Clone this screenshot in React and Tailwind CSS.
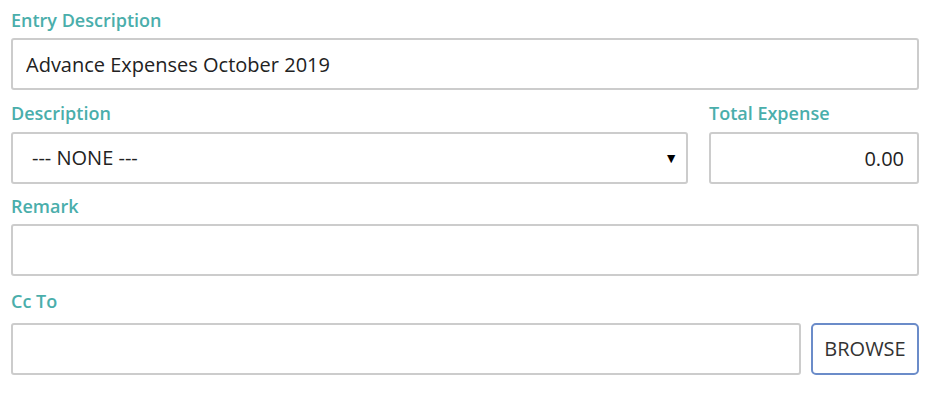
const labelClass =
  "block h-6 text-[18px] font-semibold leading-6 text-[#4aaeab]";
const inputClass =
  "h-[52px] w-full rounded-[3px] border-2 border-[#cccccc] bg-white px-[13px] text-[20px] text-[#222222] outline-none";

export default function App() {
  return (
    <div
      className="w-[946px] h-[404px] bg-white pl-[11px] pr-[27px] pt-[8px]"
      style={{ fontFamily: '"Open Sans", "Noto Sans", sans-serif' }}
    >
      {/* Entry description */}
      <label className={labelClass}>Entry Description</label>
      <input
        className={`${inputClass} mt-[6px]`}
        defaultValue="Advance Expenses October 2019"
      />

      {/* Description + total */}
      <div className="mt-[11px] flex gap-[21px]">
        <div className="flex-1">
          <label className={labelClass}>Description</label>
          <div className="relative mt-[7px]">
            <div className={`${inputClass} flex items-center pl-[19px]`}>--- NONE ---</div>
            <span className="pointer-events-none absolute right-[10px] top-[15px] text-[14px] text-black">
              ▼
            </span>
          </div>
        </div>
        <div className="w-[210px]">
          <label className={labelClass}>Total Expense</label>
          <input
            className={`${inputClass} mt-[7px] text-right`}
            defaultValue="0.00"
          />
        </div>
      </div>

      {/* Remark */}
      <div className="mt-[10px]">
        <label className={labelClass}>Remark</label>
        <input className={`${inputClass} mt-[6px]`} />
      </div>

      {/* Cc To */}
      <div className="mt-[13px]">
        <label className={labelClass}>Cc To</label>
        <div className="mt-[10px] flex gap-[10px]">
          <input className={`${inputClass} flex-1`} />
          <button className="h-[52px] w-[108px] rounded-[5px] border-2 border-[#6b8cc9] bg-white text-[20px] text-[#333333]">
            BROWSE
          </button>
        </div>
      </div>
    </div>
  );
}
